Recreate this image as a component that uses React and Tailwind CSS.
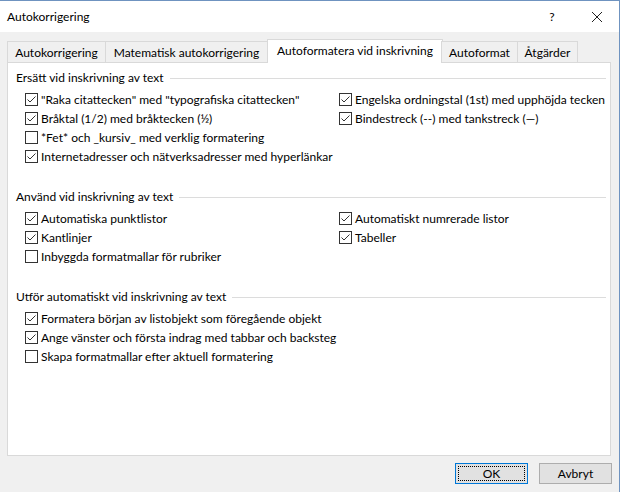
import React from 'react';

const font = { fontFamily: '"Segoe UI", Lato, "Noto Sans", sans-serif' };

const CheckBox = ({ checked }) => (
  <span className="w-[13px] h-[13px] border border-[#333333] bg-white flex items-center justify-center shrink-0">
    {checked && (
      <svg width="11" height="11" viewBox="0 0 11 11">
        <path d="M1.5 5.5 L4 8 L9.5 2.5" fill="none" stroke="#333333" strokeWidth="1" />
      </svg>
    )}
  </span>
);

const Option = ({ checked, label }) => (
  <div className="flex items-center gap-[3px] h-[19px]">
    <CheckBox checked={checked} />
    <span className="whitespace-nowrap">{label}</span>
  </div>
);

const Section = ({ title, left, right = [] }) => (
  <div className="flex flex-col">
    <div className="flex items-center gap-[6px] h-[16px]">
      <span className="whitespace-nowrap">{title}</span>
      <div className="flex-1 h-px bg-[#dcdcdc] mt-[1px]" />
    </div>
    <div className="grid grid-cols-[314px_1fr] pl-[9px] mt-[4px]">
      <div className="flex flex-col">
        {left.map((o) => (
          <Option key={o.label} {...o} />
        ))}
      </div>
      <div className="flex flex-col">
        {right.map((o) => (
          <Option key={o.label} {...o} />
        ))}
      </div>
    </div>
  </div>
);

const tabs = [
  { label: 'Autokorrigering', w: 'w-[99px]' },
  { label: 'Matematisk autokorrigering', w: 'w-[163px]' },
  { label: 'Autoformatera vid inskrivning', w: 'w-[176px]', active: true },
  { label: 'Autoformat', w: 'w-[77px]' },
  { label: 'Åtgärder', w: 'w-[61px]' },
];

export default function App() {
  return (
    <div className="w-[622px] h-[492px] bg-white text-[12px] text-black overflow-hidden" style={font}>
      <div className="w-[620px] h-[492px] border-r border-t border-[#6f93c0] flex flex-col">
        {/* Title bar */}
        <div className="h-[31px] bg-white flex items-center pl-[7px] shrink-0">
          <span className="flex-1">Autokorrigering</span>
          <span className="w-[20px] text-center mr-[29px]">?</span>
          <svg width="12" height="12" viewBox="0 0 12 12" className="mr-[16px]">
            <path d="M1 1 L11 11 M11 1 L1 11" stroke="#222" strokeWidth="1" />
          </svg>
        </div>

        {/* Body */}
        <div className="flex-1 bg-[#f0f0f0] flex flex-col pl-[7px] pr-[8px] pt-[7px]">
          {/* Tabs */}
          <div className="flex items-end h-[24px] relative z-10">
            {tabs.map((t) =>
              t.active ? (
                <div
                  key={t.label}
                  className={`${t.w} h-[24px] bg-white border border-b-0 border-[#d9d9d9] flex items-center justify-center pb-[2px] -mx-px whitespace-nowrap`}
                >
                  {t.label}
                </div>
              ) : (
                <div
                  key={t.label}
                  className={`${t.w} h-[22px] bg-[#f0f0f0] border border-[#d9d9d9] -ml-px first:ml-0 flex items-center justify-center pt-[1px] whitespace-nowrap`}
                >
                  {t.label}
                </div>
              )
            )}
          </div>

          {/* Panel */}
          <div className="h-[394px] -mt-px bg-white border border-[#d9d9d9] pl-[8px] pr-[4px] pt-[7px] flex flex-col gap-[23px]">
            <Section
              title="Ersätt vid inskrivning av text"
              left={[
                { checked: true, label: '"Raka citattecken" med "typografiska citattecken"' },
                { checked: true, label: 'Bråktal (1/2) med bråktecken (½)' },
                { checked: false, label: '*Fet* och _kursiv_ med verklig formatering' },
                { checked: true, label: 'Internetadresser och nätverksadresser med hyperlänkar' },
              ]}
              right={[
                { checked: true, label: 'Engelska ordningstal (1st) med upphöjda tecken' },
                { checked: true, label: 'Bindestreck (--) med tankstreck (—)' },
              ]}
            />
            <Section
              title="Använd vid inskrivning av text"
              left={[
                { checked: true, label: 'Automatiska punktlistor' },
                { checked: true, label: 'Kantlinjer' },
                { checked: false, label: 'Inbyggda formatmallar för rubriker' },
              ]}
              right={[
                { checked: true, label: 'Automatiskt numrerade listor' },
                { checked: true, label: 'Tabeller' },
              ]}
            />
            <Section
              title="Utför automatiskt vid inskrivning av text"
              left={[
                { checked: true, label: 'Formatera början av listobjekt som föregående objekt' },
                { checked: true, label: 'Ange vänster och första indrag med tabbar och backsteg' },
                { checked: false, label: 'Skapa formatmallar efter aktuell formatering' },
              ]}
            />
          </div>

          {/* Buttons */}
          <div className="flex justify-end gap-[11px] mt-[7px] mr-[-1px]">
            <button className="w-[73px] h-[21px] bg-[#e1e1e1] border border-[#0078d7] flex items-center justify-center p-[2px]">
              <span className="w-full h-full border border-dotted border-black flex items-center justify-center">OK</span>
            </button>
            <button className="w-[73px] h-[21px] bg-[#e1e1e1] border border-[#adadad] flex items-center justify-center">
              Avbryt
            </button>
          </div>
        </div>
      </div>
    </div>
  );
}
